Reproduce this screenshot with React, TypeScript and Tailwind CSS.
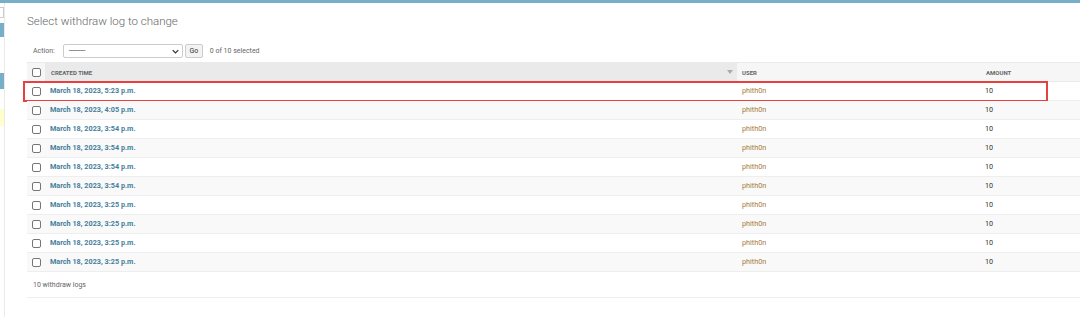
import React from 'react';

const rows = [
    '5:23 p.m.', '4:05 p.m.', '3:54 p.m.', '3:54 p.m.', '3:54 p.m.',
    '3:54 p.m.', '3:25 p.m.', '3:25 p.m.', '3:25 p.m.', '3:25 p.m.',
];

const Box = () => (
    <span className="block w-[9px] h-[9px] border border-[#767676] rounded-[2px] bg-white" />
);

const App = () => {
    return (
        <div className="w-[1080px] h-[317px] overflow-hidden bg-white font-['Roboto',sans-serif] text-[#333]">
            <div className="h-[3px] bg-[#79aec8]" />
            <div className="flex h-[314px]">
                {/* collapsed sidebar edge */}
                <div className="w-[5px] border-r border-[#eaeaea] flex flex-col">
                    <div className="mt-[4px] h-[11px] border border-[#ccc] border-l-0 bg-white" />
                    <div className="mt-[5px] h-[14px] bg-[#79aec8]" />
                    <div className="mt-[36px] h-[16px] bg-[#79aec8]" />
                    <div className="mt-[20px] h-[17px] bg-[#ffffcc]" />
                </div>

                <div className="flex-1 pl-[22px] min-w-0">
                    <h1 className="mt-[8px] h-[20px] text-[11.5px] font-light text-[#666] leading-[20px]">
                        Select withdraw log to change
                    </h1>

                    <div className="mt-[13px] h-[14px] flex items-center text-[7px] text-[#666]">
                        <span className="ml-[6px]">Action:</span>
                        <div className="ml-[8px] w-[120px] h-[14px] border border-[#ccc] rounded-[2px] flex items-center justify-between pl-[5px] pr-[3px] bg-white">
                            <span className="text-[#333] tracking-[-0.3px]">----------</span>
                            <svg width="7" height="5" viewBox="0 0 10 6"><path d="M1 1l4 4 4-4" fill="none" stroke="#333" strokeWidth="1.8" /></svg>
                        </div>
                        <div className="ml-[2px] w-[18px] h-[14px] border border-[#ccc] rounded-[2px] bg-[#f3f3f3] flex items-center justify-center text-[#333]">
                            Go
                        </div>
                        <span className="ml-[7px]">0 of 10 selected</span>
                    </div>

                    <div className="mt-[4px]">
                        <div className="grid grid-cols-[18px_692px_244px_1fr] h-[20px] bg-[#f6f6f6] border-y border-[#eaeaea] text-[6px] font-bold uppercase text-[#666] items-stretch">
                            <div className="flex items-center justify-center"><Box /></div>
                            <div className="bg-[#eaeaea] flex items-center justify-between pl-[6px] pr-[4px]">
                                <span>Created time</span>
                                <svg width="6" height="4" viewBox="0 0 6 4"><path d="M0 0h6L3 4z" fill="#aaa" /></svg>
                            </div>
                            <div className="flex items-center pl-[5px]">User</div>
                            <div className="flex items-center pl-[5px]">Amount</div>
                        </div>

                        {rows.map((t, i) => (
                            <div
                                key={i}
                                className={`relative grid grid-cols-[18px_692px_244px_1fr] h-[19px] border-b border-[#eee] text-[7.25px] items-center ${i % 2 === 0 ? 'bg-white' : 'bg-[#f9f9f9]'}`}
                            >
                                <div className="flex justify-center"><Box /></div>
                                <div className="pl-[5px] font-bold text-[#447e9b]">March 18, 2023, {t}</div>
                                <div className="pl-[5px] text-[#a57a3c]">phith0n</div>
                                <div className="pl-[4px] text-[#333]">10</div>
                                {i === 0 && (
                                    <div className="absolute left-[-4px] top-[-1px] w-[1025px] h-[21px] border-2 border-[#e8403f] pointer-events-none" />
                                )}
                            </div>
                        ))}

                        <div className="h-[26px] border-b border-[#eee] flex items-center pl-[6px] pt-[2px] text-[7px] text-[#666]">
                            10 withdraw logs
                        </div>
                    </div>
                </div>
            </div>
        </div>
    );
};

export default App;
